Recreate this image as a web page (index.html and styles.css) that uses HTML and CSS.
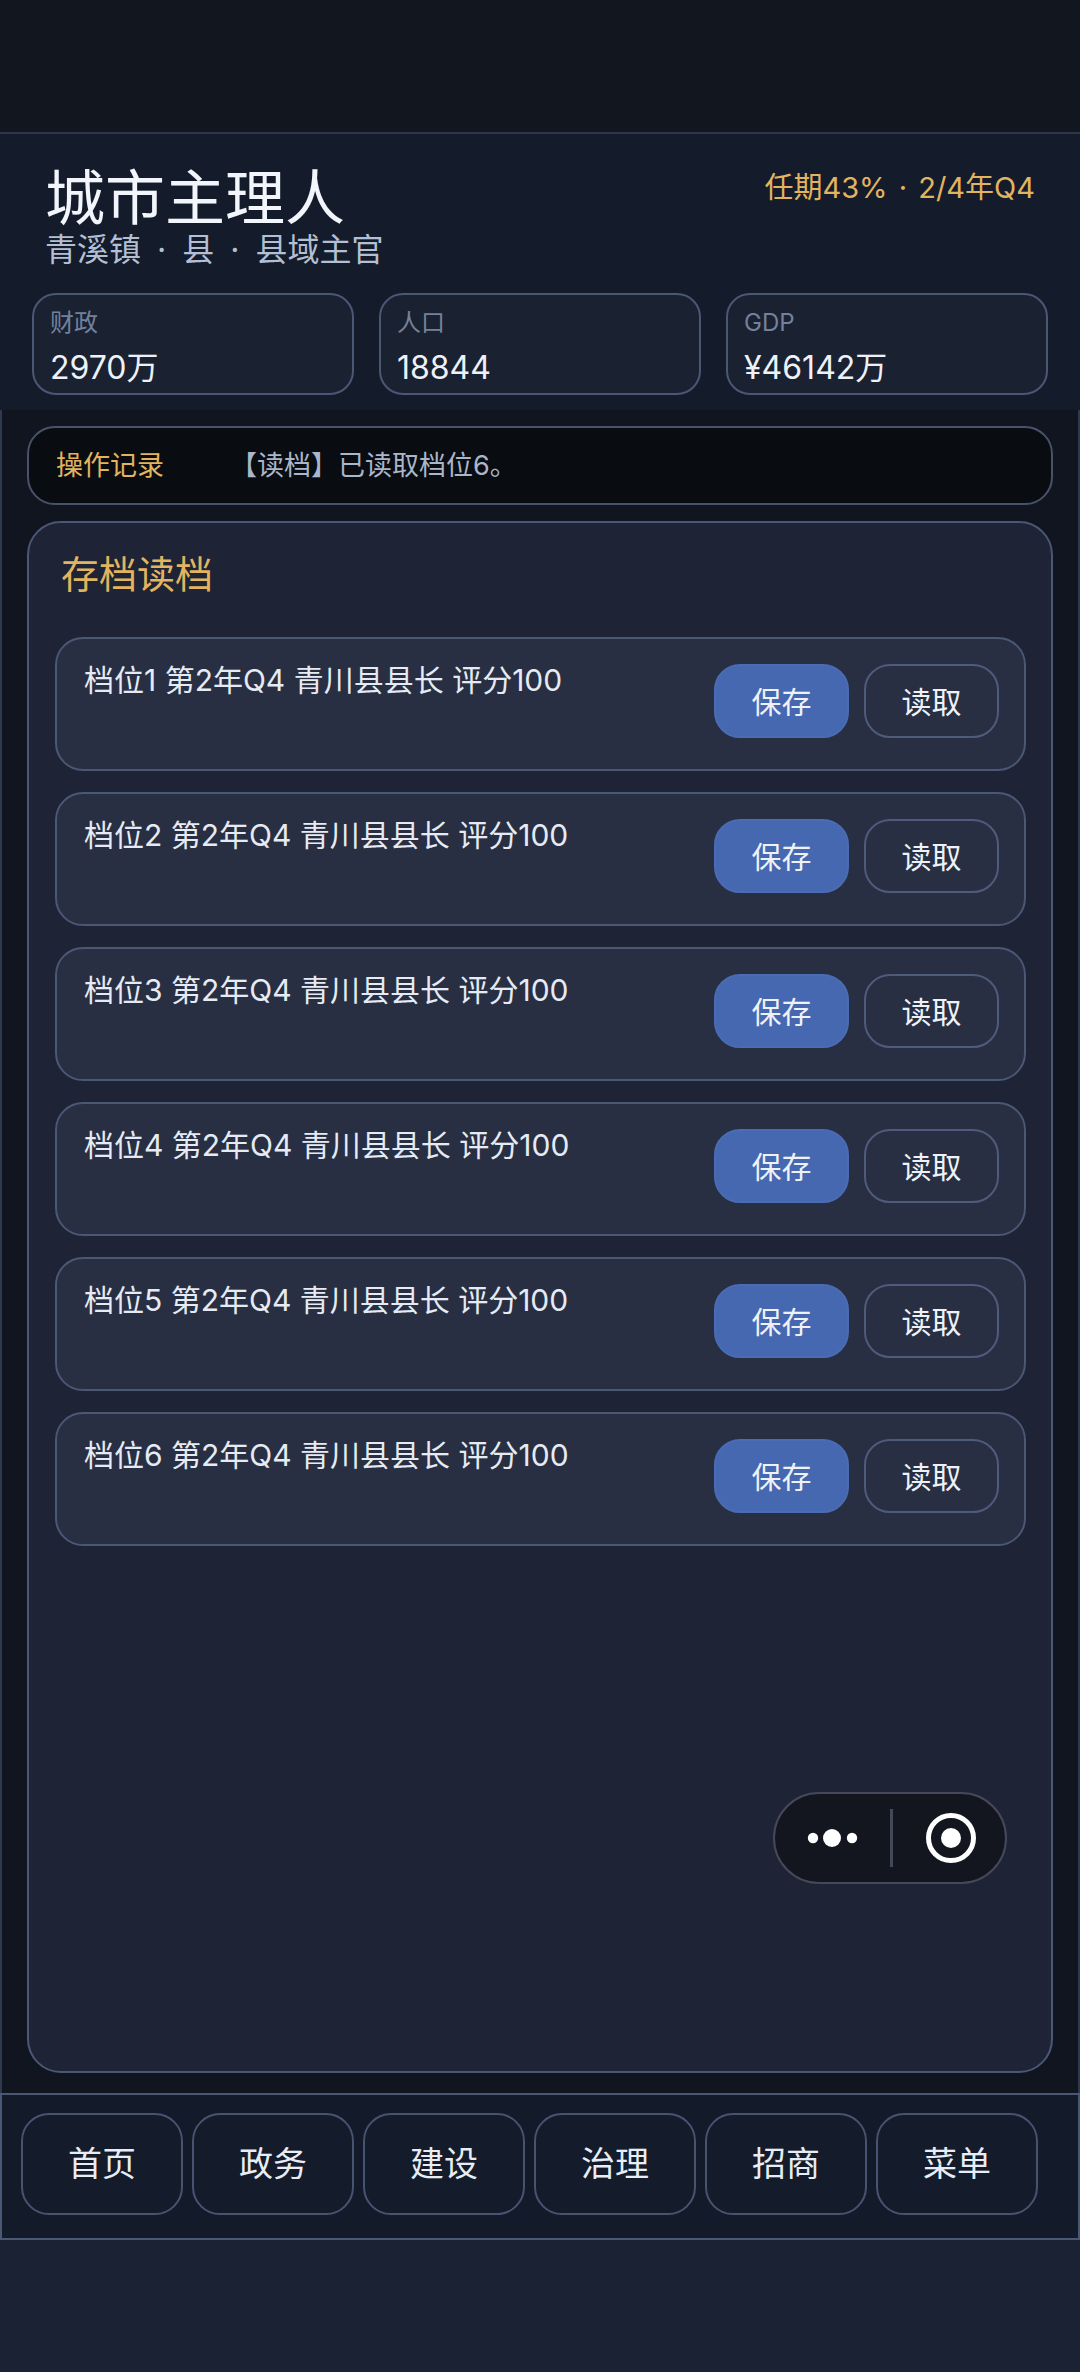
FILE: index.html
```html
<!doctype html>
<html lang="zh-CN">
  <head>
    <meta charset="utf-8">
    <meta name="viewport" content="width=device-width, initial-scale=1">
    <title>城市主理人</title>
    <link rel="stylesheet" href="styles.css">
  </head>
  <body>
    <div class="status-space"></div>

    <header class="top">
      <div class="top-line">
        <div>
          <h1>城市主理人</h1>
          <p class="sub">青溪镇 · 县 · 县域主官</p>
        </div>
        <div class="term">任期43% · 2/4年Q4</div>
      </div>
      <div class="stats">
        <div class="stat">
          <div class="stat-label">财政</div>
          <div class="stat-value">2970万</div>
        </div>
        <div class="stat">
          <div class="stat-label">人口</div>
          <div class="stat-value">18844</div>
        </div>
        <div class="stat">
          <div class="stat-label">GDP</div>
          <div class="stat-value">¥46142万</div>
        </div>
      </div>
    </header>

    <main class="main">
      <div class="log">
        <span class="log-title">操作记录</span>
        <span class="log-text">【读档】已读取档位6。</span>
      </div>

      <section class="panel">
        <h2>存档读档</h2>
        <div class="slots">
          <div class="slot">
            <div class="slot-text">档位1 第2年Q4 青川县县长 评分100</div>
            <button type="button" class="btn btn-save">保存</button>
            <button type="button" class="btn">读取</button>
          </div>
          <div class="slot">
            <div class="slot-text">档位2 第2年Q4 青川县县长 评分100</div>
            <button type="button" class="btn btn-save">保存</button>
            <button type="button" class="btn">读取</button>
          </div>
          <div class="slot">
            <div class="slot-text">档位3 第2年Q4 青川县县长 评分100</div>
            <button type="button" class="btn btn-save">保存</button>
            <button type="button" class="btn">读取</button>
          </div>
          <div class="slot">
            <div class="slot-text">档位4 第2年Q4 青川县县长 评分100</div>
            <button type="button" class="btn btn-save">保存</button>
            <button type="button" class="btn">读取</button>
          </div>
          <div class="slot">
            <div class="slot-text">档位5 第2年Q4 青川县县长 评分100</div>
            <button type="button" class="btn btn-save">保存</button>
            <button type="button" class="btn">读取</button>
          </div>
          <div class="slot">
            <div class="slot-text">档位6 第2年Q4 青川县县长 评分100</div>
            <button type="button" class="btn btn-save">保存</button>
            <button type="button" class="btn">读取</button>
          </div>
        </div>
      </section>
    </main>

    <nav class="nav">
      <button type="button" class="nav-btn">首页</button>
      <button type="button" class="nav-btn">政务</button>
      <button type="button" class="nav-btn">建设</button>
      <button type="button" class="nav-btn">治理</button>
      <button type="button" class="nav-btn">招商</button>
      <button type="button" class="nav-btn">菜单</button>
    </nav>
    <div class="bottom-space"></div>

    <!-- mini program capsule, floats over the page -->
    <div class="capsule">
      <svg class="capsule-more" width="60" height="20" viewBox="0 0 60 20">
        <circle cx="8" cy="10" r="5.2" fill="#fff"/>
        <circle cx="27" cy="10" r="9" fill="#fff"/>
        <circle cx="47" cy="10" r="5.2" fill="#fff"/>
      </svg>
      <span class="capsule-line"></span>
      <svg class="capsule-close" width="50" height="50" viewBox="0 0 50 50">
        <circle cx="25" cy="25" r="22.5" fill="none" stroke="#fff" stroke-width="5"/>
        <circle cx="25" cy="25" r="10" fill="#fff"/>
      </svg>
    </div>
  </body>
</html>
```

FILE: styles.css
```css
* {
  box-sizing: border-box;
}
html, body {
  margin: 0;
  height: 2372px;
}
body {
  position: relative;
  display: flex;
  flex-direction: column;
  background-color: #1b2234;
  color: #e8edf5;
  font-family: Inter, "Noto Sans CJK SC", "Noto Sans", sans-serif;
  overflow: hidden;
}
h1, h2, p {
  margin: 0;
  font-weight: 400;
}

.status-space {
  height: 134px;
  flex: none;
  background-color: #12171f;
  border-bottom: 2px solid #2d374b;
}

.top {
  height: 276px;
  flex: none;
  padding: 32px 32px 0;
  background-color: #141b2a;
}
.top-line {
  display: flex;
  justify-content: space-between;
  align-items: flex-start;
  padding: 0 13px 0 13px;
}
h1 {
  font-size: 60px;
  line-height: 64px;
  color: #f2f5fb;
}
.sub {
  margin-top: -2px;
  font-size: 32px;
  line-height: 44px;
  word-spacing: 7px;
  color: #b3bfd2;
}
.term {
  margin-top: 2px;
  font-size: 29px;
  line-height: 40px;
  word-spacing: 3px;
  color: #e2b45f;
}
.stats {
  display: flex;
  gap: 25px;
  margin-top: 21px;
}
.stat {
  flex: 1;
  height: 102px;
  padding: 14px 16px 0;
  background-color: #1a2232;
  border: 2px solid #4a5775;
  border-radius: 24px;
}
.stat-label {
  font-size: 24px;
  line-height: 28px;
  color: #74819a;
}
.stat-value {
  margin-top: 9px;
  font-size: 32px;
  line-height: 44px;
  color: #eef2f8;
}

.main {
  flex: 1;
  display: flex;
  flex-direction: column;
  gap: 16px;
  padding: 16px 25px 20px;
  background-color: #11151f;
  border-left: 2px solid #2f394f;
  border-right: 2px solid #2f394f;
}
.log {
  height: 79px;
  flex: none;
  display: flex;
  align-items: center;
  gap: 66px;
  padding: 0 27px 4px;
  background-color: #090c11;
  border: 2px solid #48526a;
  border-radius: 28px;
  font-size: 27px;
}
.log-title {
  color: #e2b45f;
}
.log-text {
  color: #aab6c9;
}
.panel {
  flex: 1;
  padding: 26px 25px 25px 26px;
  background-color: #1e2335;
  border: 2px solid #4a5775;
  border-radius: 34px;
}
h2 {
  margin-bottom: 38px;
  padding-left: 6px;
  font-size: 38px;
  line-height: 50px;
  color: #e2b45f;
}
.slots {
  display: flex;
  flex-direction: column;
  gap: 21px;
}
.slot {
  height: 134px;
  display: flex;
  align-items: flex-start;
  gap: 15px;
  padding: 25px 25px 0 27px;
  background-color: #282f43;
  border: 2px solid #4a5775;
  border-radius: 28px;
}
.slot-text {
  flex: 1;
  font-size: 30px;
  line-height: 32px;
  color: #e6ebf3;
}
.btn {
  width: 135px;
  height: 74px;
  padding: 0 0 2px;
  background-color: #282f43;
  border: 2px solid #4f5b7a;
  border-radius: 26px;
  color: #eef2f8;
  font-family: inherit;
  font-size: 30px;
}
.btn-save {
  background-color: #4668b0;
  border-color: #4a6cb4;
}

.nav {
  height: 147px;
  flex: none;
  display: flex;
  gap: 9px;
  padding: 18px 0 0 19px;
  background-color: #131a29;
  border: 2px solid #4a5775;
}
.nav-btn {
  width: 162px;
  height: 102px;
  padding: 0 0 5px;
  background-color: #141b2a;
  border: 2px solid #475370;
  border-radius: 28px;
  color: #e8edf5;
  font-family: inherit;
  font-size: 34px;
}
.bottom-space {
  height: 132px;
  flex: none;
}

.capsule {
  position: absolute;
  left: 773px;
  top: 1792px;
  width: 234px;
  height: 92px;
  display: flex;
  align-items: center;
  background-color: #13151f;
  border: 2px solid #44485a;
  border-radius: 46px;
}
.capsule-more {
  margin-left: 30px;
}
.capsule-line {
  width: 3px;
  height: 58px;
  margin-left: 25px;
  background-color: #44485a;
}
.capsule-close {
  margin-left: 33px;
}
```
